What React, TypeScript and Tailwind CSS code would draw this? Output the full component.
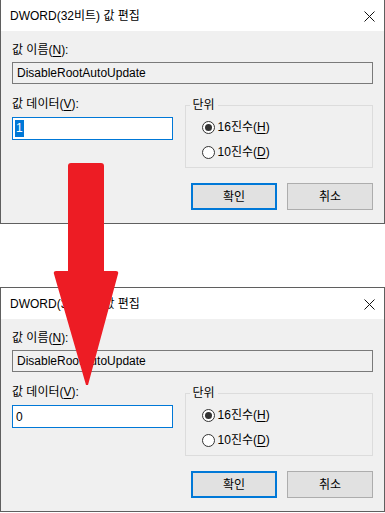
import React from "react";

const FONT = "font-['Liberation_Sans','Noto_Sans_CJK_KR',sans-serif]";

const Key = ({ children }: { children: React.ReactNode }) => (
  <span className="underline underline-offset-[2px]">{children}</span>
);

const Radio = ({ checked, label, hotkey }: { checked: boolean; label: string; hotkey: string }) => (
  <div className="flex items-center h-[16px] ml-[12px]">
    <span className="w-[13px] h-[13px] rounded-full border border-[#333] bg-white flex items-center justify-center">
      {checked && <span className="w-[7px] h-[7px] rounded-full bg-[#333]" />}
    </span>
    <span className="ml-[3px] leading-[16px]">
      {label}(<Key>{hotkey}</Key>)
    </span>
  </div>
);

const EditDialog = ({ value, selected }: { value: string; selected: boolean }) => (
  <div className="h-[225px] border border-[#5f5f5f] bg-[#f0f0f0] flex flex-col shrink-0">
    {/* title bar */}
    <div className="h-[31px] bg-white flex items-center justify-between pl-[9px] pr-[9px]">
      <span className="text-[12px] leading-[16px] text-black">DWORD(32비트) 값 편집</span>
      <svg width="11" height="11" viewBox="0 0 11 11" className="mt-[1px]">
        <path d="M0.5 0.5 L10.5 10.5 M10.5 0.5 L0.5 10.5" stroke="#111" strokeWidth="1" />
      </svg>
    </div>

    {/* body */}
    <div className="flex flex-col pl-[11px] pr-[11px] text-[12px] text-black">
      <div className="mt-[11px] leading-[16px]">
        값 이름(<Key>N</Key>):
      </div>
      <div className="mt-[4px] h-[22px] border border-[#7a7a7a] bg-[#f0f0f0] flex items-center pl-[4px] leading-[16px]">
        DisableRootAutoUpdate
      </div>

      <div className="flex items-start mt-[12px]">
        <div className="w-[161px] flex flex-col">
          <div className="leading-[16px]">
            값 데이터(<Key>V</Key>):
          </div>
          <div className="mt-[5px] h-[23px] border border-[#0078d7] bg-white flex items-center pl-[2px]">
            {selected ? (
              <span className="bg-[#0078d7] text-white px-[1px] leading-[17px]">{value}</span>
            ) : (
              <span className="pl-[1px] leading-[16px]">{value}</span>
            )}
          </div>
        </div>

        <fieldset className="ml-[12px] w-[189px] border border-[#dcdcdc] pl-[4px] pb-[7px]">
          <legend className="px-[3px] leading-[18px]">단위</legend>
          <div className="mt-[5px]">
            <Radio checked label="16진수" hotkey="H" />
          </div>
          <div className="mt-[9px]">
            <Radio checked={false} label="10진수" hotkey="D" />
          </div>
        </fieldset>
      </div>

      <div className="flex justify-end gap-[10px] mt-[15px]">
        <button className="w-[86px] h-[27px] border-2 border-[#0078d7] bg-[#e1e1e1] leading-[16px]">확인</button>
        <button className="w-[86px] h-[27px] border border-[#adadad] bg-[#e1e1e1] leading-[16px]">취소</button>
      </div>
    </div>
  </div>
);

export default function App() {
  return (
    <div className={`relative w-[385px] h-[513px] overflow-hidden bg-white ${FONT}`}>
      <div className="flex flex-col -mt-[1px]">
        <EditDialog value="1" selected />
        <div className="h-[63px]" />
        <EditDialog value="0" selected={false} />
      </div>

      {/* red arrow drawn over both dialogs */}
      <svg className="absolute left-0 top-0 pointer-events-none" width="385" height="513" viewBox="0 0 385 513">
        <path
          d="M68 166 Q68 163 71 163 L101 163 Q104 163 104 166 L104 271 L116 271 Q119 271 118 274 L88 385 L86 385 L54 274 Q53 271 56 271 L68 271 Z"
          fill="#ed1c24"
        />
      </svg>
    </div>
  );
}
